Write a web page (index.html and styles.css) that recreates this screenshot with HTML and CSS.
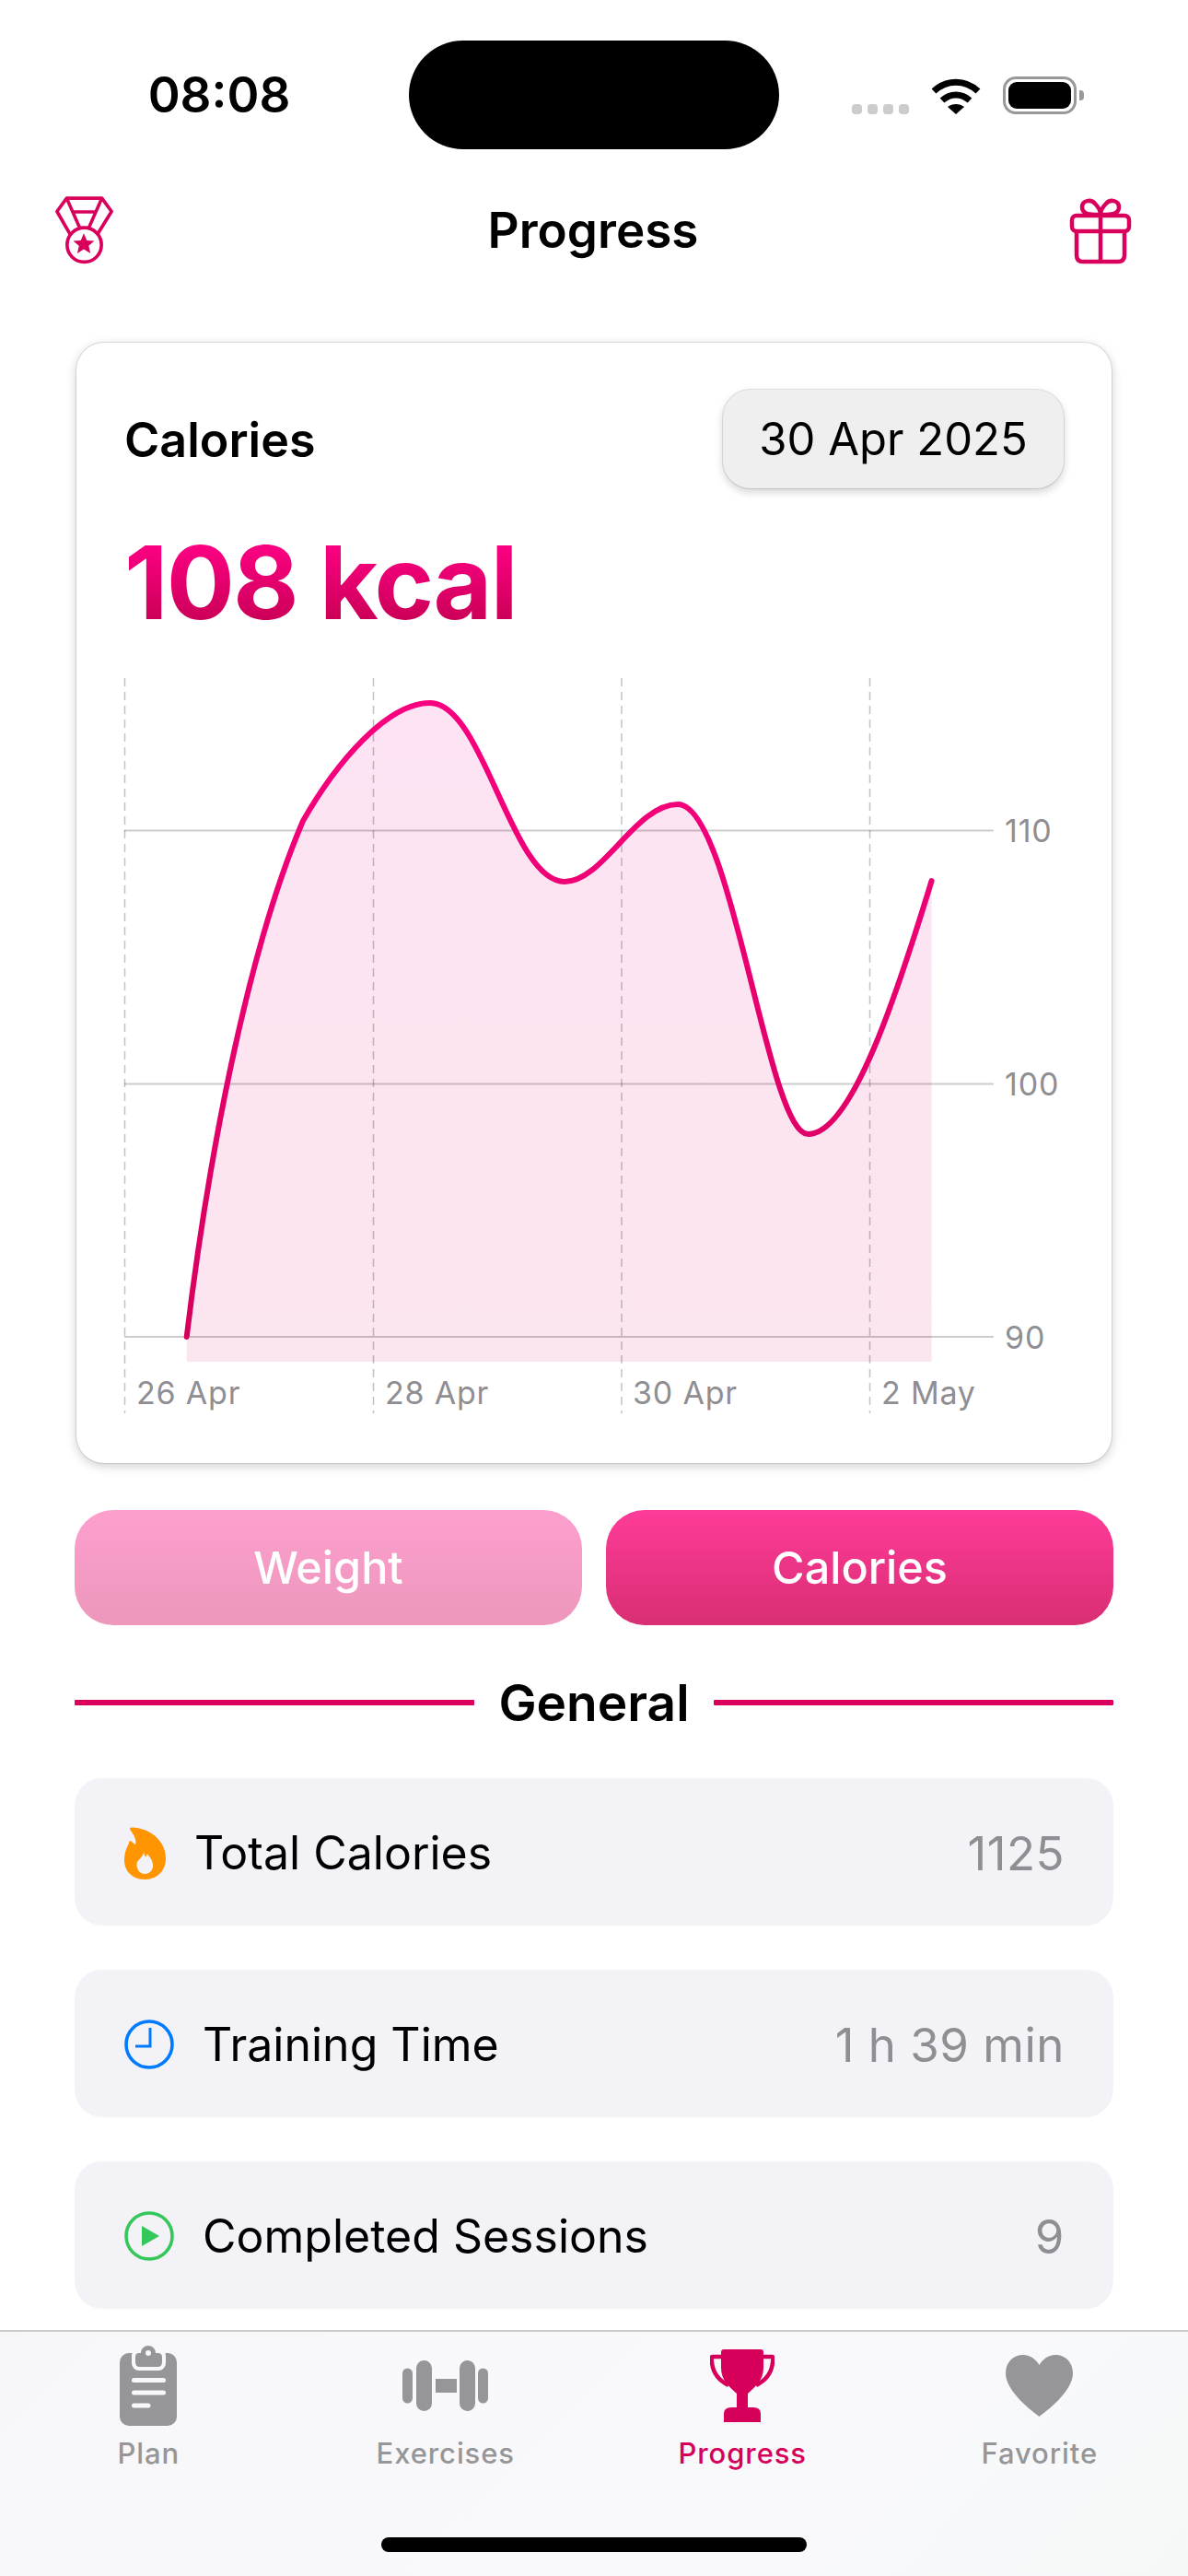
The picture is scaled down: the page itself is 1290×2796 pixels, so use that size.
FILE: index.html
```html
<!DOCTYPE html>
<html lang="en">
<head>
  <meta charset="UTF-8">
  <meta name="viewport" content="width=device-width, initial-scale=1">
  <title>Progress</title>
  <link rel="stylesheet" href="styles.css">
</head>
<body>
  <div class="phone">

    <div class="status">
      <div class="time">08:08</div>
      <div class="island"></div>
      <div class="status-icons">
        <div class="dots"><span></span><span></span><span></span><span></span></div>
        <svg class="wifi" viewBox="0 0 54 39" width="54" height="39">
          <path d="M3 14C17 1 37 1 51 14" fill="none" stroke="#000" stroke-width="7"/>
          <path d="M12 24C21 16 33 16 42 24" fill="none" stroke="#000" stroke-width="7"/>
          <path d="M18 31C23 27 31 27 36 31L27 39Z" fill="#000"/>
        </svg>
        <div class="battery"><div class="battery-level"></div></div>
        <div class="battery-nub"></div>
      </div>
    </div>

    <header class="topbar">
      <svg class="medal" viewBox="28 22 68 78" width="65" height="75" fill="none" stroke="#d9005c" stroke-width="3.800" stroke-linejoin="round">
        <path d="M46 65L31 39L42 24H82L93 39L77 65"/>
        <path d="M42 24L57 58M82 24L67 58M48 39.5H76"/>
        <circle cx="62" cy="77" r="19.5"/>
        <path d="M61.500 64L65 72L73.500 72.500L67 78L69 86.500L61.500 82L54 86.500L56 78L49.500 72.500L58 72Z" fill="#d9005c" stroke="none"/>
      </svg>
      <h1 class="title">Progress</h1>
      <svg class="gift" viewBox="23 25 68 73" width="68" height="73" fill="none" stroke="#d9005c" stroke-width="4.500">
        <rect x="26" y="45" width="62" height="17" rx="5"/>
        <path d="M31 62V88Q31 95 38 95H76Q83 95 83 88V62"/>
        <path d="M57 45V95"/>
        <path d="M57 44C50 44 37 45 37 36C37 28 47 27 51 32C54 35 57 40 57 44C57 40 60 35 63 32C67 27 77 28 77 36C77 45 64 44 57 44Z"/>
      </svg>
    </header>

    <main class="content">
      <section class="card">
        <div class="card-head">
          <div class="card-title">Calories</div>
          <div class="date-pill">30 Apr 2025</div>
        </div>
        <div class="big-value"><span>108 kcal</span></div>

        <svg class="chart" viewBox="0 0 1024 800" width="1024" height="800">
          <defs>
            <linearGradient id="lineGrad" gradientUnits="userSpaceOnUse" x1="0" y1="27" x2="0" y2="715">
              <stop offset="0" stop-color="#f8007f"/>
              <stop offset="1" stop-color="#d6005c"/>
            </linearGradient>
            <linearGradient id="areaGrad" gradientUnits="userSpaceOnUse" x1="0" y1="27" x2="0" y2="742">
              <stop offset="0" stop-color="#fde3f3"/>
              <stop offset="1" stop-color="#fbe5ef"/>
            </linearGradient>
          </defs>
          <path class="area" d="M67.700 715C90 530 132 300 194 155C230 92 285 27 332 27C390 27 420 221 478 221C520 221 555 137 601 137C660 137 698 495 742.600 495C790 495 840 340 876.600 220V742H67.700Z"/>
          <path class="grid-h" d="M0 165.500H944M0 440.500H944M0 715H944"/>
          <path class="grid-v" d="M0.500 0V798M270.500 0V798M540 0V798M809.500 0V798"/>
          <path class="line" d="M67.700 715C90 530 132 300 194 155C230 92 285 27 332 27C390 27 420 221 478 221C520 221 555 137 601 137C660 137 698 495 742.600 495C790 495 840 340 876.600 220"/>
          <text class="axis" x="956" y="177.500">110</text>
          <text class="axis" x="956" y="452.500">100</text>
          <text class="axis" x="956" y="728">90</text>
          <text class="axis" x="13" y="788">26 Apr</text>
          <text class="axis" x="283" y="788">28 Apr</text>
          <text class="axis" x="552" y="788">30 Apr</text>
          <text class="axis" x="822" y="788">2 May</text>
        </svg>
      </section>

      <div class="switch">
        <button class="switch-btn weight">Weight</button>
        <button class="switch-btn calories">Calories</button>
      </div>

      <div class="section-head">
        <span class="rule"></span>
        <h2>General</h2>
        <span class="rule"></span>
      </div>

      <div class="rows">
        <div class="row">
          <svg class="row-icon" viewBox="0 0 45 57" width="45" height="57">
            <path d="M6.500 1C5.500 1.500 6 2.800 7 4C10 8 12.500 12 12.500 17C12.500 18.500 11.500 19.500 10.800 18.500C9.500 17 8.500 15.500 5.500 15C5 19 3 21 1.500 26C.5 29 0 32 0 36C0 48 9 57 22 57C35 57 45 48 45 34C45 15 28 1 8 .5Z" fill="#ff9500"/>
            <path d="M21 27C21 31 17 34 14 38C12 44 16 51 22 51C28 51 32 46 31 40C30 34 26 31 24.500 29C24 34 22 33 21 27Z" fill="#f2f2f7"/>
          </svg>
          <span class="row-label flame-label">Total Calories</span>
          <span class="row-value">1125</span>
        </div>
        <div class="row">
          <svg class="row-icon" viewBox="0 0 54 54" width="54" height="54" fill="none" stroke="#007aff">
            <circle cx="27" cy="27" r="25" stroke-width="3.600"/>
            <path d="M28 9V29H12" stroke-width="3"/>
          </svg>
          <span class="row-label">Training Time</span>
          <span class="row-value">1 h 39 min</span>
        </div>
        <div class="row">
          <svg class="row-icon" viewBox="0 0 54 54" width="54" height="54">
            <circle cx="27" cy="27" r="25" fill="none" stroke="#34c759" stroke-width="3.600"/>
            <path d="M19 16L38 27L19 38Z" fill="#34c759"/>
          </svg>
          <span class="row-label">Completed Sessions</span>
          <span class="row-value">9</span>
        </div>
      </div>
    </main>

    <nav class="tabbar">
      <div class="tabs">
        <div class="tab">
          <div class="tab-icon">
            <svg viewBox="0 0 62 88" width="62" height="88">
              <rect y="9" width="62" height="79" rx="10" fill="#969698"/>
              <rect x="13" y="4" width="37" height="24" rx="8" fill="#f7f8fa"/>
              <path d="M17 13Q17 9 21 9H23A8 8 0 0 1 39 9H41Q46 9 46 13V19Q46 24 41 24H22Q17 24 17 19Z" fill="#969698"/>
              <circle cx="31" cy="9" r="3" fill="#f7f8fa"/>
              <path d="M15.500 38.500H47.500M15.500 52H47.500M15.500 66H31" stroke="#f7f8fa" stroke-width="5" stroke-linecap="round"/>
            </svg>
          </div>
          <span class="tab-label">Plan</span>
        </div>
        <div class="tab">
          <div class="tab-icon">
            <svg viewBox="0 0 93 55" width="93" height="55" fill="#969698">
              <rect y="8.500" width="11" height="38" rx="5.500"/>
              <rect x="15" width="17" height="55" rx="8.500"/>
              <rect x="36" y="20" width="23" height="15"/>
              <rect x="62" width="17" height="55" rx="8.500"/>
              <rect x="82" y="8.500" width="11" height="38" rx="5.500"/>
            </svg>
          </div>
          <span class="tab-label">Exercises</span>
        </div>
        <div class="tab tab-active">
          <div class="tab-icon">
            <svg viewBox="0 0 70 79" width="70" height="79" fill="#d6005a">
              <path d="M15 0H55Q58 0 58 3V20C58 33 50 40 41 48V63H47Q55 63 55 70V79H15V70Q15 63 23 63H29V48C20 40 12 33 12 20V3Q12 0 15 0Z"/>
              <path d="M13 8H3C1 8 1.500 10 2 14C3 26 10 34 20 39M57 8H67C69 8 68.500 10 68 14C67 26 60 34 50 39" fill="none" stroke="#d6005a" stroke-width="4.500"/>
            </svg>
          </div>
          <span class="tab-label">Progress</span>
        </div>
        <div class="tab">
          <div class="tab-icon">
            <svg viewBox="0 0 73 67" width="73" height="67">
              <path d="M36.500 67C30 62 0 40 0 20C0 8 8 0 19 0C27 0 33 5 36.500 11C40 5 46 0 54 0C65 0 73 8 73 20C73 40 43 62 36.500 67Z" fill="#969698"/>
            </svg>
          </div>
          <span class="tab-label">Favorite</span>
        </div>
      </div>
      <div class="home-indicator"></div>
    </nav>

  </div>
</body>
</html>
```

FILE: styles.css
```css
* {
  box-sizing: border-box;
  margin: 0;
  padding: 0;
}
body {
  background: #fff;
  font-family: 'Inter', 'Liberation Sans', sans-serif;
  color: #000;
}
.phone {
  width: 1290px;
  height: 2796px;
  display: flex;
  flex-direction: column;
  overflow: hidden;
}

/* status bar */
.status {
  height: 170px;
  padding-top: 44px;
  display: flex;
  align-items: flex-start;
}
.time {
  width: 444px;
  height: 118px;
  padding-left: 32px;
  display: flex;
  align-items: center;
  justify-content: center;
  font-size: 53px;
  font-weight: 600;
}
.island {
  width: 402px;
  height: 118px;
  background: #000;
  border-radius: 59px;
}
.status-icons {
  margin-left: 79px;
  margin-top: 39px;
  display: flex;
  align-items: flex-end;
}
.dots {
  display: flex;
  gap: 6px;
  margin-right: 24px;
}
.dots span {
  width: 11px;
  height: 11px;
  border-radius: 4px;
  background: #ccc;
}
.wifi {
  margin-right: 24px;
}
.battery {
  width: 80px;
  height: 41px;
  padding: 3px;
  border: 3px solid #999;
  border-radius: 14px;
}
.battery-level {
  height: 100%;
  background: #000;
  border-radius: 9px;
}
.battery-nub {
  width: 5px;
  height: 11px;
  margin: 0 0 15px 3px;
  background: #999;
  border-radius: 0 4px 4px 0;
}

/* nav */
.topbar {
  height: 160px;
  padding: 0 61px 0 59px;
  display: grid;
  grid-template-columns: 1fr auto 1fr;
  align-items: center;
}
.title {
  font-size: 53px;
  font-weight: 600;
}
.gift {
  justify-self: end;
}

.content {
  padding: 42px 81px 0;
}

/* chart card */
.card {
  margin: 0 2px;
  height: 1216px;
  padding: 51px 52px;
  background: #fff;
  border-radius: 30px;
  box-shadow: 0 0 0 1px rgba(0,0,0,0.1), 0 3px 12px rgba(0,0,0,0.2);
}
.card-head {
  display: flex;
  align-items: center;
  justify-content: space-between;
}
.card-title {
  padding-top: 2px;
  font-size: 52px;
  font-weight: 600;
}
.date-pill {
  width: 370px;
  height: 107px;
  display: flex;
  align-items: center;
  justify-content: center;
  font-size: 49px;
  background: #efefef;
  border-radius: 30px;
  box-shadow: 0 0 0 1px rgba(0,0,0,0.1), 0 4px 10px rgba(0,0,0,0.18);
}
.big-value {
  height: 206px;
  padding-top: 37px;
  font-size: 110px;
  line-height: 130px;
  font-weight: 700;
  letter-spacing: -1.8px;
}
.big-value span {
  background: linear-gradient(180deg, #f8007f 25%, #cc0058 80%);
  -webkit-background-clip: text;
  background-clip: text;
  color: transparent;
}
.chart {
  display: block;
  overflow: visible;
}
.area {
  fill: url(#areaGrad);
}
.grid-h {
  fill: none;
  stroke: rgba(0,0,0,0.2);
  stroke-width: 2;
}
.grid-v {
  fill: none;
  stroke: rgba(0,0,0,0.24);
  stroke-width: 1.5;
  stroke-dasharray: 9 6;
}
.line {
  fill: none;
  stroke: url(#lineGrad);
  stroke-width: 6;
  stroke-linecap: round;
}
.axis {
  font-size: 34px;
  letter-spacing: 0.8px;
  fill: #8e8e93;
}

/* weight / calories switch */
.switch {
  margin-top: 51px;
  display: grid;
  grid-template-columns: 1fr 1fr;
  gap: 26px;
}
.switch-btn {
  height: 125px;
  border: none;
  border-radius: 42px;
  color: #fff;
  font-family: inherit;
  font-size: 48.500px;
  font-weight: 500;
}
.weight {
  background: linear-gradient(180deg, #fd9fce, #ec97bb);
}
.calories {
  background: linear-gradient(180deg, #fe3b99, #d92e73);
}

.section-head {
  margin-top: 54px;
  height: 60px;
  display: flex;
  align-items: center;
  gap: 26px;
}
.section-head h2 {
  font-size: 55px;
  font-weight: 600;
}
.rule {
  flex: 1;
  height: 6px;
  background: #d9005c;
  border-radius: 1px;
}

/* stats */
.rows {
  margin-top: 52px;
  display: flex;
  flex-direction: column;
  gap: 48px;
}
.row {
  height: 160px;
  padding: 2px 53px 0 54px;
  display: flex;
  align-items: center;
  gap: 31px;
  background: #f2f2f7;
  border-radius: 30px;
  font-size: 50px;
}
.row-label {
  flex: 1;
}
.row-value {
  color: #8e8e93;
  font-size: 51px;
  letter-spacing: 0.5px;
}

/* tab bar */
.tabbar {
  margin-top: auto;
  height: 267px;
  padding-top: 13px;
  display: flex;
  flex-direction: column;
  border-top: 2px solid #ccc;
  background: linear-gradient(135deg, #f7f7f9, #f9f9fb 60%, #f6f8f8);
}
.tabs {
  display: grid;
  grid-template-columns: repeat(4, 1fr);
}
.tab {
  display: flex;
  flex-direction: column;
  align-items: center;
  color: #969698;
}
.tab-active {
  color: #d6005a;
}
.tab-icon {
  height: 90px;
  display: flex;
  align-items: center;
}
.tab-label {
  margin-top: 10px;
  font-size: 31px;
  line-height: 38px;
  font-weight: 500;
  letter-spacing: 0.9px;
}
.home-indicator {
  width: 462px;
  height: 16px;
  margin: auto auto 26px;
  background: #000;
  border-radius: 8px;
}
```
